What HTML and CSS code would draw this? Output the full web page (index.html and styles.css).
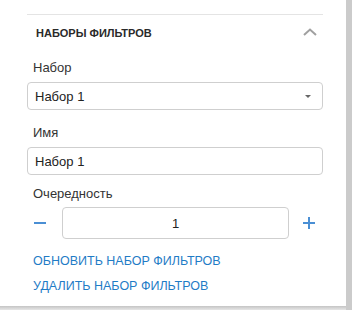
FILE: index.html
```html
<!DOCTYPE html>
<html lang="ru">
<head>
    <meta charset="UTF-8">
    <meta name="viewport" content="width=device-width, initial-scale=1.0">
    <title>Наборы фильтров</title>
    <link rel="stylesheet" href="styles.css">
</head>
<body>
    <div class="layout">
        <div class="main">
            <div class="panel">
                <!-- Section header -->
                <div class="section-head">
                    <span class="section-title">НАБОРЫ ФИЛЬТРОВ</span>
                    <svg class="chevron" width="14" height="8" viewBox="0 0 14 8">
                        <path d="M1 7 L7 1.5 L13 7" fill="none" stroke="#a0a0a0" stroke-width="2"/>
                    </svg>
                </div>

                <div class="field">
                    <label class="field-label">Набор</label>
                    <div class="select">
                        <span>Набор 1</span>
                        <span class="caret"></span>
                    </div>
                </div>

                <div class="field">
                    <label class="field-label">Имя</label>
                    <div class="input">Набор 1</div>
                </div>

                <div class="field field-order">
                    <label class="field-label">Очередность</label>
                    <div class="stepper">
                        <span class="step step-minus">
                            <svg width="12" height="12" viewBox="0 0 12 12">
                                <path d="M0 6 H12" stroke="#4a8fd4" stroke-width="2"/>
                            </svg>
                        </span>
                        <div class="input input-num">1</div>
                        <span class="step step-plus">
                            <svg width="12" height="12" viewBox="0 0 12 12">
                                <path d="M0 6 H12 M6 0 V12" stroke="#4a8fd4" stroke-width="2"/>
                            </svg>
                        </span>
                    </div>
                </div>

                <div class="actions">
                    <a class="action">ОБНОВИТЬ НАБОР ФИЛЬТРОВ</a>
                    <a class="action">УДАЛИТЬ НАБОР ФИЛЬТРОВ</a>
                </div>
            </div>
            <div class="bottom-edge"></div>
        </div>
        <div class="scrollbar"></div>
    </div>
</body>
</html>
```

FILE: styles.css
```css
body {
    margin: 0;
    padding: 0;
    font-family: "Liberation Sans", Arial, sans-serif;
    color: #333;
    background: #fff;
}
.layout {
    display: flex;
    height: 310px;
}
.main {
    flex: 1;
    display: flex;
    flex-direction: column;
}
.scrollbar {
    width: 6px;
    background-color: #cbcbcb;
}
.panel {
    flex: 1;
    margin: 14px 23px 0 27px;
    border-top: 1px solid #e4e4e4;
}
.section-head {
    height: 36px;
    display: flex;
    align-items: center;
    justify-content: space-between;
    padding: 0 6px 0 9px;
}
.section-title {
    font-size: 11px;
    font-weight: bold;
    color: #2a2a2a;
}
.chevron {
    margin-top: -2px;
}
.field {
    margin-top: 9px;
}
.field + .field {
    margin-top: 15px;
}
.field-order {
    margin-top: 11px !important;
}
.field-label {
    display: block;
    font-size: 13px;
    line-height: 15px;
    padding-left: 6px;
    margin-bottom: 7px;
}
.field-order .field-label {
    margin-bottom: 6px;
}
.select, .input {
    height: 26px;
    border: 1px solid #cfcfcf;
    border-radius: 4px;
    display: flex;
    align-items: center;
    justify-content: space-between;
    padding: 0 11px 0 7px;
    font-size: 13px;
    color: #222;
}
.caret {
    width: 0;
    height: 0;
    border-left: 3px solid transparent;
    border-right: 3px solid transparent;
    border-top: 3px solid #666;
}
.stepper {
    display: grid;
    grid-template-columns: 35px 1fr 34px;
    align-items: center;
}
.input-num {
    height: 30px;
    justify-content: center;
    padding: 0;
}
.step {
    display: flex;
}
.step-minus {
    padding-left: 7px;
}
.step-plus {
    justify-content: flex-end;
    padding-right: 8px;
}
.actions {
    margin-top: 15px;
    padding-left: 6px;
    display: flex;
    flex-direction: column;
    gap: 10px;
}
.action {
    font-size: 12.5px;
    line-height: 15px;
    color: #1f7cc6;
    cursor: pointer;
}
.bottom-edge {
    height: 4px;
    background: linear-gradient(#c4c4c4, #e6e6e6);
}
```
